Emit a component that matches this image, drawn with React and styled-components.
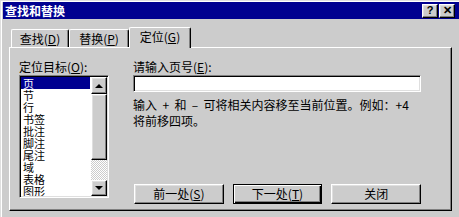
import React from "react";
import styled, { createGlobalStyle } from "styled-components";

const GlobalStyle = createGlobalStyle`
  html, body { margin: 0; padding: 0; background: #cccccc; }
  body { font-family: "Noto Sans CJK SC", "Liberation Sans", sans-serif; font-size: 12px; color: #000; }
  * { box-sizing: border-box; }
`;

const Window = styled.div`
  width: 459px;
  height: 217px;
  background: #cccccc;
  border-top: 1px solid #dfdfdf;
  border-left: 1px solid #dfdfdf;
  box-shadow: inset 1px 1px 0 #ffffff;
  padding: 1px 0 0 2px;
  overflow: hidden;
`;

const TitleBar = styled.div`
  height: 17px;
  background: #000090;
  color: #fff;
  display: flex;
  align-items: center;
  justify-content: space-between;
  padding: 0 4px 0 2px;
  font-size: 12px;
  font-weight: 700;
  line-height: 17px;
`;

const TitleButtons = styled.div`
  display: flex;
  gap: 1px;
`;

const Raised = styled.div`
  background: #cccccc;
  border: 1px solid;
  border-color: #ffffff #000000 #000000 #ffffff;
  box-shadow: inset -1px -1px 0 #808080, inset 1px 1px 0 #dfdfdf;
`;

const TitleButton = styled(Raised)`
  width: 16px;
  height: 14px;
  display: flex;
  align-items: center;
  justify-content: center;
  color: #000;
  font-family: "Liberation Sans", sans-serif;
  font-weight: 700;
  font-size: 11px;
  line-height: 1;
`;

const Body = styled.div`
  padding: 8px 0 0 6px;
`;

const TabRow = styled.div`
  display: flex;
  align-items: flex-end;
  height: 20px;
  padding-left: 2px;
  position: relative;
  z-index: 1;
`;

const Tab = styled.div`
  width: ${(p) => p.$w}px;
  height: ${(p) => (p.$active ? 21 : 18)}px;
  margin-bottom: ${(p) => (p.$active ? -1 : 0)}px;
  background: #cccccc;
  border-top: 1px solid #ffffff;
  border-left: 1px solid #ffffff;
  border-right: 1px solid #000000;
  box-shadow: inset -1px 0 0 #808080;
  border-radius: 2px 2px 0 0;
  display: flex;
  align-items: ${(p) => (p.$active ? "flex-start" : "center")};
  padding-top: ${(p) => (p.$active ? 2 : 0)}px;
  justify-content: center;
  line-height: 14px;
`;

const Panel = styled.div`
  width: 443px;
  height: 164px;
  border: 1px solid;
  border-color: #ffffff #000000 #000000 #ffffff;
  box-shadow: inset -1px -1px 0 #808080;
  padding: 12px 0 0 9px;
  display: grid;
  grid-template-columns: 90px 288px;
  column-gap: 24px;
  align-items: stretch;
`;

const Column = styled.div`
  display: flex;
  flex-direction: column;
  height: 144px;
`;

const Label = styled.div`
  line-height: 14px;
  height: 14px;
  margin-bottom: 1px;
  white-space: nowrap;
`;

const Sunken = styled.div`
  background: #ffffff;
  border: 1px solid;
  border-color: #808080 #ffffff #ffffff #808080;
  box-shadow: inset 1px 1px 0 #000000, inset -1px -1px 0 #dfdfdf;
`;

const ListBox = styled(Sunken)`
  width: 90px;
  height: 123px;
  padding: 1px 1px 1px 1px;
  display: flex;
`;

const Items = styled.div`
  flex: 1;
  overflow: hidden;
  padding-right: 1px;
`;

const Item = styled.div`
  font-size: 11px;
  line-height: 12px;
  height: 12px;
  padding-left: 2px;
  overflow: hidden;
  background: ${(p) => (p.$sel ? "#000090" : "transparent")};
  color: ${(p) => (p.$sel ? "#ffffff" : "#000000")};
  white-space: nowrap;
`;

const ScrollBar = styled.div`
  width: 16px;
  display: flex;
  flex-direction: column;
`;

const ScrollBtn = styled(Raised)`
  height: ${(p) => p.$h}px;
  display: flex;
  align-items: center;
  justify-content: center;
`;

const Arrow = styled.div`
  width: 0;
  height: 0;
  border-left: 4px solid transparent;
  border-right: 4px solid transparent;
  ${(p) => (p.$down ? "border-top: 4px solid #000;" : "border-bottom: 4px solid #000;")}
`;

const Track = styled.div`
  flex: 1;
  background-color: #ffffff;
  background-image: repeating-conic-gradient(#cccccc 0 25%, #ffffff 0 50%);
  background-size: 2px 2px;
`;

const Input = styled(Sunken)`
  height: 17px;
  width: 288px;
`;

const Help = styled.div`
  margin-top: 5px;
  line-height: 16px;
  white-space: pre;
`;

const ButtonRow = styled.div`
  margin-top: auto;
  padding-left: 1px;
  display: flex;
  gap: 9px;
`;

const Button = styled.div`
  width: 90px;
  height: 20px;
  background: #cccccc;
  border: 1px solid;
  border-color: ${(p) => (p.$default ? "#000000" : "#ffffff #000000 #000000 #ffffff")};
  box-shadow: ${(p) =>
    p.$default
      ? "inset 1px 1px 0 #ffffff, inset -1px -1px 0 #000000, inset -2px -2px 0 #808080"
      : "inset -1px -1px 0 #808080, inset 1px 1px 0 #dfdfdf"};
  display: flex;
  align-items: center;
  justify-content: center;
  line-height: 14px;
`;

const items = ["页", "节", "行", "书签", "批注", "脚注", "尾注", "域", "表格", "图形"];

export default function App() {
  return (
    <>
      <GlobalStyle />
      <Window>
        <TitleBar>
          <span>查找和替换</span>
          <TitleButtons>
            <TitleButton>?</TitleButton>
            <TitleButton>✕</TitleButton>
          </TitleButtons>
        </TitleBar>
        <Body>
          <TabRow>
            <Tab $w={58}>查找(<u>D</u>)</Tab>
            <Tab $w={60}>替换(<u>P</u>)</Tab>
            <Tab $w={62} $active>定位(<u>G</u>)</Tab>
          </TabRow>
          <Panel>
            <Column>
              <Label>定位目标(<u>O</u>):</Label>
              <ListBox>
                <Items>
                  {items.map((t, i) => (
                    <Item key={t} $sel={i === 0}>{t}</Item>
                  ))}
                </Items>
                <ScrollBar>
                  <ScrollBtn $h={17}><Arrow /></ScrollBtn>
                  <ScrollBtn $h={66} />
                  <Track />
                  <ScrollBtn $h={16}><Arrow $down /></ScrollBtn>
                </ScrollBar>
              </ListBox>
            </Column>
            <Column>
              <Label>请输入页号(<u>E</u>):</Label>
              <Input />
              <Help>{"输入  +  和  –  可将相关内容移至当前位置。例如：+4\n将前移四项。"}</Help>
              <ButtonRow>
                <Button>前一处(<u>S</u>)</Button>
                <Button $default>下一处(<u>T</u>)</Button>
                <Button>关闭</Button>
              </ButtonRow>
            </Column>
          </Panel>
        </Body>
      </Window>
    </>
  );
}
